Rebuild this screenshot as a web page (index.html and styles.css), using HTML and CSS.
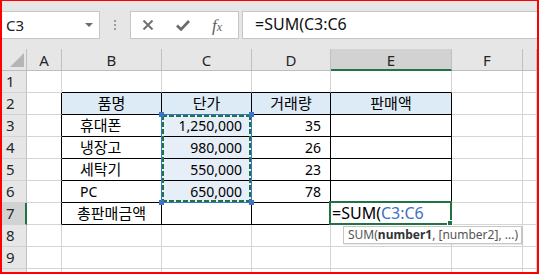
FILE: index.html
```
<!DOCTYPE html>
<html lang="ko">

<head>
    <meta charset="UTF-8">
    <title>SUM 함수</title>
    <link rel="stylesheet" href="styles.css">
</head>

<body>
    <div class="frame">
        <!-- Name box + formula bar -->
        <div class="toolbar">
            <div class="namebox">
                <span>C3</span>
                <span class="caret"></span>
            </div>
            <div class="grip"><i></i><i></i><i></i></div>
            <div class="fxbox">
                <svg width="12" height="10" viewBox="0 0 12 10">
                    <path d="M1.5 0.5 L10.5 9.5 M10.5 0.5 L1.5 9.5" stroke="#707070" stroke-width="2" fill="none" />
                </svg>
                <svg width="14" height="11" viewBox="0 0 14 11">
                    <path d="M1 5.5 L5 9.5 L13 1" stroke="#6a6a6a" stroke-width="2.6" fill="none" />
                </svg>
                <span class="fx">f<sub>x</sub></span>
            </div>
            <div class="formula">=SUM(C3:C6</div>
        </div>

        <!-- Worksheet -->
        <div class="sheet">
            <div class="grid">
                <div class="ch corner"><i></i></div>
                <div class="ch">A</div>
                <div class="ch">B</div>
                <div class="ch">C</div>
                <div class="ch">D</div>
                <div class="ch on">E</div>
                <div class="ch">F</div>
                <div class="ch"></div>

                <div class="rh">1</div>
                <div class="cell"></div>
                <div class="cell tt"></div>
                <div class="cell tt"></div>
                <div class="cell tt"></div>
                <div class="cell tt"></div>
                <div class="cell"></div>
                <div class="cell"></div>

                <div class="rh">2</div>
                <div class="cell tl"></div>
                <div class="cell t head ko">품명</div>
                <div class="cell t head ko">단가</div>
                <div class="cell t head ko">거래량</div>
                <div class="cell t head ko">판매액</div>
                <div class="cell"></div>
                <div class="cell"></div>

                <div class="rh">3</div>
                <div class="cell tl"></div>
                <div class="cell t ind ko">휴대폰</div>
                <div class="cell t num sel">1,250,000</div>
                <div class="cell t num">35</div>
                <div class="cell t"></div>
                <div class="cell"></div>
                <div class="cell"></div>

                <div class="rh">4</div>
                <div class="cell tl"></div>
                <div class="cell t ind ko">냉장고</div>
                <div class="cell t num sel">980,000</div>
                <div class="cell t num">26</div>
                <div class="cell t"></div>
                <div class="cell"></div>
                <div class="cell"></div>

                <div class="rh">5</div>
                <div class="cell tl"></div>
                <div class="cell t ind ko">세탁기</div>
                <div class="cell t num sel">550,000</div>
                <div class="cell t num">23</div>
                <div class="cell t"></div>
                <div class="cell"></div>
                <div class="cell"></div>

                <div class="rh">6</div>
                <div class="cell tl"></div>
                <div class="cell t ind">PC</div>
                <div class="cell t num sel">650,000</div>
                <div class="cell t num">78</div>
                <div class="cell t"></div>
                <div class="cell"></div>
                <div class="cell"></div>

                <div class="rh on">7</div>
                <div class="cell tl"></div>
                <div class="cell t mid ko">총판매금액</div>
                <div class="cell t"></div>
                <div class="cell t"></div>
                <div class="cell t edit">=SUM(<span class="ref">C3:C6</span></div>
                <div class="cell"></div>
                <div class="cell"></div>

                <div class="rh">8</div>
                <div class="cell"></div>
                <div class="cell"></div>
                <div class="cell"></div>
                <div class="cell"></div>
                <div class="cell"></div>
                <div class="cell"></div>
                <div class="cell"></div>

                <div class="rh">9</div>
                <div class="cell"></div>
                <div class="cell"></div>
                <div class="cell"></div>
                <div class="cell"></div>
                <div class="cell"></div>
                <div class="cell"></div>
                <div class="cell"></div>

                <div class="rh"></div>
                <div class="cell"></div>
                <div class="cell"></div>
                <div class="cell"></div>
                <div class="cell"></div>
                <div class="cell"></div>
                <div class="cell"></div>
                <div class="cell"></div>
            </div>

            <!-- referenced range C3:C6 -->
            <div class="marquee">
                <i class="hd tlh"></i><i class="hd trh"></i><i class="hd blh"></i><i class="hd brh"></i>
            </div>
            <!-- active cell E7 -->
            <div class="active"><i></i></div>
            <!-- function tip -->
            <div class="tip">SUM(<b>number1</b>, [number2], ...)</div>
        </div>
    </div>
</body>

</html>
```

FILE: styles.css
```
html,
body {
    margin: 0;
    padding: 0;
}

body {
    font-family: "Noto Sans", "Noto Sans CJK KR", sans-serif;
    color: #000;
    background: #fff;
}

.frame {
    width: 539px;
    height: 274px;
    box-sizing: border-box;
    border: 2px solid #ff0000;
    border-top-width: 1px;
    overflow: hidden;
    background: #e6e6e6;
}

/* Toolbar */
.toolbar {
    display: flex;
    align-items: flex-start;
    height: 48px;
    box-sizing: border-box;
    padding-top: 10px;
}

.namebox {
    width: 98px;
    height: 28px;
    box-sizing: border-box;
    border: 1px solid #c6c6c6;
    border-left: none;
    background: #fff;
    display: flex;
    align-items: center;
    justify-content: space-between;
    padding: 0 6px 0 4px;
    font-size: 15px;
    color: #222;
}

.caret {
    width: 0;
    height: 0;
    border-left: 4px solid transparent;
    border-right: 4px solid transparent;
    border-top: 4px solid #6b6b6b;
}

.grip {
    display: flex;
    flex-direction: column;
    gap: 2px;
    margin: 9px 14px 0 14px;
}

.grip i {
    width: 2px;
    height: 2px;
    background: #9c9c9c;
}

.fxbox {
    width: 109px;
    height: 28px;
    box-sizing: border-box;
    border: 1px solid #c6c6c6;
    background: #fff;
    display: flex;
    align-items: center;
    gap: 22px;
    padding-left: 11px;
}

.fx {
    font-family: "Liberation Serif", serif;
    font-style: italic;
    font-size: 17px;
    color: #5e5e5e;
    line-height: 1;
}

.fx sub {
    font-size: 12px;
    vertical-align: 0;
}

.formula {
    flex: 1;
    height: 28px;
    box-sizing: border-box;
    margin-left: 3px;
    border: 1px solid #c6c6c6;
    border-right: none;
    background: #fff;
    padding-left: 12px;
    font-size: 16px;
    line-height: 25px;
    color: #111;
}

/* Worksheet */
.sheet {
    position: relative;
    background: #fff;
}

.grid {
    display: grid;
    grid-template-columns: 25px 35px 100px 90px 79px 121px 71px 1fr;
    grid-auto-rows: 22px;
}

.grid > div {
    box-sizing: border-box;
    white-space: nowrap;
    overflow: hidden;
}

.ch {
    background: #e6e6e6;
    border-right: 1px solid #c0c0c0;
    border-bottom: 1px solid #bdbdbd;
    text-align: center;
    font-size: 15px;
    line-height: 22px;
    color: #262626;
}

.ch.on {
    background: #d2d2d2;
    border-bottom: 2px solid #217346;
}

.corner {
    display: flex;
    justify-content: flex-end;
    align-items: flex-end;
    padding: 0 2px 3px 0;
}

.corner i {
    width: 14px;
    height: 14px;
    background: #b5b5b5;
    clip-path: polygon(100% 0, 100% 100%, 0 100%);
}

.rh {
    background: #e6e6e6;
    border-right: 1px solid #c0c0c0;
    border-bottom: 1px solid #d2d2d2;
    padding-left: 4px;
    font-size: 15px;
    line-height: 21px;
    color: #262626;
}

.rh.on {
    background: #d2d2d2;
    border-right: 2px solid #217346;
}

.cell {
    border-right: 1px solid #d4d4d4;
    border-bottom: 1px solid #d4d4d4;
    padding: 0 3px;
    font-size: 14px;
    line-height: 21px;
}

.cell.ko {
    font-size: 15px;
}

/* table borders B2:E7 */
.cell.tt {
    border-bottom-color: #000;
}

.cell.tl {
    border-right-color: #000;
}

.cell.t {
    border-right-color: #000;
    border-bottom-color: #000;
}

.head {
    background: #ddebf7;
    text-align: center;
}

.ind {
    padding-left: 18px;
}

.mid {
    text-align: center;
}

.num {
    text-align: right;
    padding-right: 9px;
}

.sel {
    background: #e6eef8;
}

.edit {
    font-size: 16px;
    line-height: 20px;
    padding-left: 1px;
    overflow: visible;
}

.ref {
    color: #3f6fc5;
}

/* overlays */
.marquee {
    position: absolute;
    left: 159px;
    top: 65px;
    width: 91px;
    height: 89px;
    box-sizing: border-box;
    border: 1px solid #3b73c9;
    background:
        repeating-linear-gradient(90deg, #217346 0 5px, transparent 5px 7px) top / 100% 2px no-repeat,
        repeating-linear-gradient(90deg, #217346 0 5px, transparent 5px 7px) bottom / 100% 2px no-repeat,
        repeating-linear-gradient(180deg, #217346 0 5px, transparent 5px 7px) left / 2px 100% no-repeat,
        repeating-linear-gradient(180deg, #217346 0 5px, transparent 5px 7px) right / 2px 100% no-repeat;
}

.hd {
    position: absolute;
    width: 5px;
    height: 5px;
    background: #3b73c9;
}

.tlh { left: -3px; top: -3px; }
.trh { right: -3px; top: -3px; }
.blh { left: -3px; bottom: -3px; }
.brh { right: -3px; bottom: -3px; }

.active {
    position: absolute;
    left: 327px;
    top: 152px;
    width: 123px;
    height: 24px;
    box-sizing: border-box;
    border: 2px solid #217346;
}

.active i {
    position: absolute;
    right: -3px;
    bottom: -3px;
    width: 4px;
    height: 4px;
    background: #217346;
    border: 1px solid #fff;
}

.tip {
    position: absolute;
    left: 341px;
    top: 177px;
    width: 179px;
    height: 18px;
    box-sizing: border-box;
    border: 1px solid #c6c6c6;
    background: #fff;
    padding-left: 4px;
    font-size: 12px;
    line-height: 16px;
    color: #555;
    white-space: nowrap;
    box-shadow: 1px 1px 1px rgba(0, 0, 0, 0.08);
}

.tip b {
    color: #333;
}
```
